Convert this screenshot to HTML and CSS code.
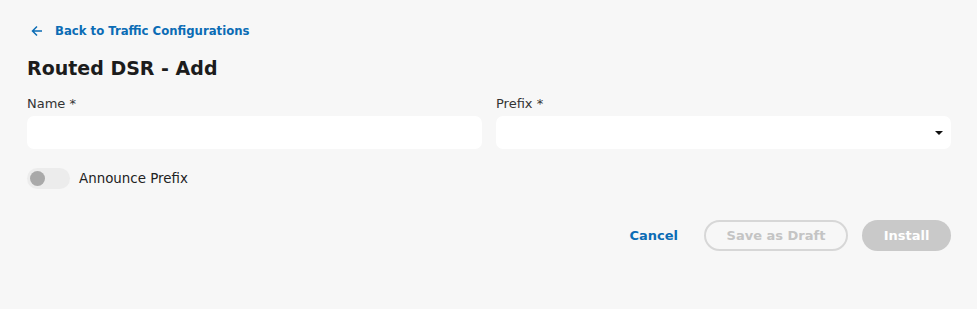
FILE: index.html
```html
<!DOCTYPE html>
<html lang="en">

<head>
    <meta charset="UTF-8">
    <meta name="viewport" content="width=device-width, initial-scale=1.0">
    <title>Routed DSR - Add</title>
    <link rel="stylesheet" href="styles.css">
</head>

<body>
    <div class="wrap">
        <a class="back_link" href="#">
            <svg class="back_icon" width="12" height="12" viewBox="0 0 12 12">
                <path d="M11 6H1.5M6 1.5L1.5 6L6 10.5" fill="none" stroke="currentColor" stroke-width="1.5" />
            </svg>
            <span>Back to Traffic Configurations</span>
        </a>

        <h1 class="title">Routed DSR - Add</h1>

        <div class="form_row">
            <label class="form_elem">
                <div class="form_elem_label">Name *</div>
                <input class="text_input" type="text" name="name" />
            </label>
            <label class="form_elem">
                <div class="form_elem_label">Prefix *</div>
                <div class="select_wrap">
                    <select class="select_input" name="prefix">
                        <option value=""></option>
                    </select>
                    <span class="caret"></span>
                </div>
            </label>
        </div>

        <label class="toggle_row">
            <span class="toggle"><span class="toggle_knob"></span></span>
            <span class="toggle_label">Announce Prefix</span>
        </label>

        <div class="actions">
            <button class="btn btn_link">Cancel</button>
            <button class="btn btn_outline" disabled>Save as Draft</button>
            <button class="btn btn_fill" disabled>Install</button>
        </div>
    </div>
</body>

</html>
```

FILE: styles.css
```css
body {
    margin: 0;
    background-color: #f7f7f7;
    font-family: "DejaVu Sans", sans-serif;
    color: #1c1c1c;
}

.wrap {
    padding: 22px 26px 0 27px;
}

/* 뒤로가기 */
.back_link {
    display: flex;
    align-items: center;
    gap: 12px;
    padding-left: 4px;

    color: #0b6cb5;
    font-size: 11.7px;
    font-weight: 600;
    text-decoration: none;
    height: 17px;
}

.title {
    margin: 16px 0 0 0;
    font-size: 19px;
    font-weight: bold;
    line-height: 26px;
}

/* 입력 */
.form_row {
    display: grid;
    grid-template-columns: 1fr 1fr;
    gap: 14px;
    margin-top: 15px;
}

.form_elem {
    display: block;
}

.form_elem_label {
    font-size: 13px;
    line-height: 16px;
    color: #333;
    margin-bottom: 4px;
}

.text_input,
.select_input {
    width: 100%;
    height: 33px;
    box-sizing: border-box;
    border: none;
    border-radius: 7px;
    background-color: #fff;
    padding-left: 12px;
    outline: none;
    font: inherit;
}

.select_wrap {
    position: relative;
}

.select_input {
    appearance: none;
    -webkit-appearance: none;
}

.caret {
    position: absolute;
    right: 8px;
    top: 15px;
    width: 0;
    height: 0;
    border-left: 4px solid transparent;
    border-right: 4px solid transparent;
    border-top: 4px solid #111;
}

/* 토글 */
.toggle_row {
    display: flex;
    align-items: center;
    gap: 9px;
    margin-top: 19px;
}

.toggle {
    display: flex;
    align-items: center;
    width: 43px;
    height: 21px;
    box-sizing: border-box;
    padding-left: 3px;
    border-radius: 11px;
    background-color: #ececec;
}

.toggle_knob {
    width: 15px;
    height: 15px;
    border-radius: 50%;
    background-color: #a9a9a9;
}

.toggle_label {
    font-size: 13.4px;
    color: #222;
}

/* 버튼 */
.actions {
    display: flex;
    justify-content: flex-end;
    align-items: center;
    gap: 14px;
    margin-top: 31px;
}

.btn {
    height: 31px;
    border-radius: 16px;
    font: inherit;
    font-size: 13px;
    font-weight: 600;
    box-sizing: border-box;
}

.btn_link {
    border: none;
    background: none;
    color: #0b6cb5;
    padding: 0;
    margin-right: 12px;
}

.btn_outline {
    width: 144px;
    border: 2px solid #d7d7d7;
    background: none;
    color: #c4c4c4;
}

.btn_fill {
    width: 89px;
    border: none;
    background-color: #c9c9c9;
    color: #fff;
}
```
